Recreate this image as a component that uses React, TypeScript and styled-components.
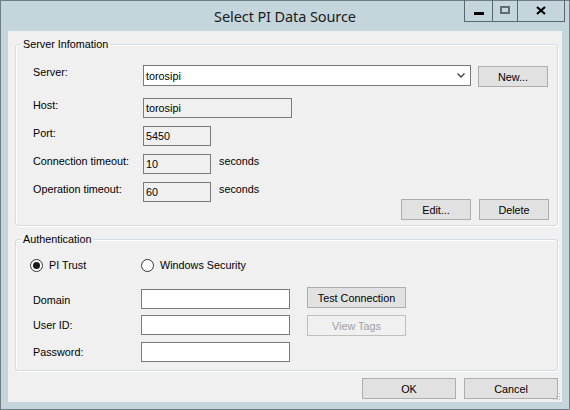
import React from "react";
import styled, { createGlobalStyle } from "styled-components";

const Global = createGlobalStyle`
  html, body { margin: 0; padding: 0; background: #ffffff; }
  body { font-family: "Liberation Sans", Arial, sans-serif; font-size: 10.8px; color: #000; }
  * { box-sizing: border-box; }
`;

const Window = styled.div`
  width: 570px;
  height: 410px;
  border: 1px solid #6f7e86;
  background: #c4d6dc;
  display: flex;
  flex-direction: column;
  position: relative;
`;

const TitleBar = styled.div`
  height: 30px;
  display: flex;
  align-items: center;
  justify-content: center;
  position: relative;
`;

const Title = styled.div`
  font-family: "Noto Sans", "Open Sans", sans-serif;
  font-size: 14.5px;
  color: #1b1b1b;
  margin-top: -1px;
  letter-spacing: -0.1px;
`;

const CaptionButtons = styled.div`
  position: absolute;
  top: -1px;
  right: 4px;
  height: 22px;
  display: flex;
  border: 1px solid #5b6770;
  border-top: none;
`;

const CaptionButton = styled.div<{ $w: number; $last?: boolean }>`
  width: ${(p) => p.$w}px;
  height: 21px;
  display: flex;
  align-items: center;
  justify-content: center;
  border-right: ${(p) => (p.$last ? "none" : "1px solid #5b6770")};
`;

const MinGlyph = styled.div`
  width: 10px;
  height: 3px;
  background: #000;
  margin-top: 6px;
`;

const MaxGlyph = styled.div`
  width: 10px;
  height: 8px;
  border: 2px solid #5f6a72;
  margin-top: -1px;
`;

const Client = styled.div`
  margin: 0 7px 7px 7px;
  height: 371px;
  background: #f0f0f0;
  padding: 0 4px 0 7px;
  display: flex;
  flex-direction: column;
  position: relative;
`;

const Group = styled.div<{ $top: number; $h: number }>`
  position: relative;
  margin-top: ${(p) => p.$top}px;
  height: ${(p) => p.$h}px;
  border: 1px solid #d5dbe0;
  border-radius: 3px;
  box-shadow: inset 1px 1px 0 #ffffff, 1px 1px 0 #ffffff;
  padding-left: 17px;
  display: flex;
  flex-direction: column;
`;

const Legend = styled.span`
  position: absolute;
  top: -8px;
  left: 5px;
  padding: 0 2px;
  background: #f0f0f0;
  line-height: 14px;
  color: #000;
`;

const Row = styled.div<{ $top: number; $align?: string }>`
  display: flex;
  align-items: ${(p) => p.$align || "flex-start"};
  margin-top: ${(p) => p.$top}px;
`;

const Label = styled.div<{ $w: number; $mt?: number }>`
  width: ${(p) => p.$w}px;
  margin-top: ${(p) => p.$mt || 0}px;
  line-height: 15px;
  flex-shrink: 0;
`;

const Box = styled.div<{ $w: number; $h?: number; $bg?: string; $mt?: number }>`
  width: ${(p) => p.$w}px;
  height: ${(p) => p.$h || 20}px;
  margin-top: ${(p) => p.$mt || 0}px;
  border: 1px solid #7a7a7a;
  background: ${(p) => p.$bg || "#ffffff"};
  display: flex;
  align-items: center;
  padding-left: 2px;
  flex-shrink: 0;
`;

const Combo = styled(Box)`
  justify-content: space-between;
  padding-right: 5px;
`;

const Unit = styled.div`
  margin-left: 8px;
  line-height: 15px;
`;

const Button = styled.div<{ $w: number; $disabled?: boolean; $ml?: number; $mt?: number }>`
  width: ${(p) => p.$w}px;
  height: 21px;
  margin-left: ${(p) => p.$ml || 0}px;
  margin-top: ${(p) => p.$mt || 0}px;
  border: 1px solid ${(p) => (p.$disabled ? "#bfbfbf" : "#adadad")};
  background: ${(p) => (p.$disabled ? "#f0f0f0" : "#e1e1e1")};
  color: ${(p) => (p.$disabled ? "#a0a0a0" : "#000")};
  display: flex;
  align-items: center;
  justify-content: center;
  flex-shrink: 0;
`;

const Spacer = styled.div<{ $w?: number }>`
  flex: ${(p) => (p.$w ? `0 0 ${p.$w}px` : "1")};
`;

const RadioItem = styled.div<{ $w: number; $ml?: number }>`
  display: flex;
  align-items: center;
  width: ${(p) => p.$w}px;
  margin-left: ${(p) => p.$ml || 0}px;
  line-height: 14px;
`;

const RadioCircle = styled.div<{ $checked?: boolean }>`
  width: 13px;
  height: 13px;
  border-radius: 50%;
  border: 1px solid #333333;
  background: #ffffff;
  margin-right: 6px;
  display: flex;
  align-items: center;
  justify-content: center;
  &::after {
    content: "";
    width: 7px;
    height: 7px;
    border-radius: 50%;
    background: ${(p) => (p.$checked ? "#1a1a1a" : "transparent")};
  }
`;

const Footer = styled.div`
  display: flex;
  justify-content: flex-end;
  gap: 8px;
  margin-top: 7px;
`;

const Grip = styled.svg`
  position: absolute;
  right: 1px;
  bottom: 1px;
`;

export default function App() {
  return (
    <>
      <Global />
      <Window>
        <TitleBar>
          <Title>Select PI Data Source</Title>
          <CaptionButtons>
            <CaptionButton $w={28}>
              <MinGlyph />
            </CaptionButton>
            <CaptionButton $w={25}>
              <MaxGlyph />
            </CaptionButton>
            <CaptionButton $w={46} $last>
              <svg width="10" height="9" viewBox="0 0 10 9">
                <path d="M1 1 L9 8 M9 1 L1 8" stroke="#000" strokeWidth="2.2" />
              </svg>
            </CaptionButton>
          </CaptionButtons>
        </TitleBar>
        <Client>
          <Group $top={13} $h={182}>
            <Legend>Server Infomation</Legend>
            <Row $top={20}>
              <Label $w={110}>Server:</Label>
              <Combo $w={328} $h={21}>
                <span>torosipi</span>
                <svg width="8" height="5" viewBox="0 0 8 5">
                  <path d="M0.5 0.5 L4 4 L7.5 0.5" stroke="#444" strokeWidth="1.4" fill="none" />
                </svg>
              </Combo>
              <Button $w={70} $ml={7} $mt={1}>New...</Button>
            </Row>
            <Row $top={11}>
              <Label $w={110}>Host:</Label>
              <Box $w={149} $bg="#f0f0f0">torosipi</Box>
            </Row>
            <Row $top={8}>
              <Label $w={110}>Port:</Label>
              <Box $w={68} $bg="#f0f0f0">5450</Box>
            </Row>
            <Row $top={8}>
              <Label $w={110}>Connection timeout:</Label>
              <Box $w={68} $bg="#f0f0f0">10</Box>
              <Unit>seconds</Unit>
            </Row>
            <Row $top={8}>
              <Label $w={110}>Operation timeout:</Label>
              <Box $w={68} $bg="#f0f0f0">60</Box>
              <Unit>seconds</Unit>
              <Spacer />
              <Button $w={70} $mt={17}>Edit...</Button>
              <Button $w={70} $ml={8} $mt={17}>Delete</Button>
              <Spacer $w={8} />
            </Row>
          </Group>
          <Group $top={13} $h={132}>
            <Legend>Authentication</Legend>
            <Row $top={18} $align="center">
              <RadioItem $w={111} $ml={-3}>
                <RadioCircle $checked />
                PI Trust
              </RadioItem>
              <RadioItem $w={150}>
                <RadioCircle />
                Windows Security
              </RadioItem>
            </Row>
            <Row $top={15}>
              <Label $w={108} $mt={6}>Domain</Label>
              <Box $w={149} $mt={2} />
              <Button $w={99} $ml={17}>Test Connection</Button>
            </Row>
            <Row $top={6}>
              <Label $w={108} $mt={3}>User ID:</Label>
              <Box $w={149} />
              <Button $w={99} $ml={17} $disabled>View Tags</Button>
            </Row>
            <Row $top={6}>
              <Label $w={108} $mt={3}>Password:</Label>
              <Box $w={149} />
            </Row>
          </Group>
          <Footer>
            <Button $w={94}>OK</Button>
            <Button $w={94}>Cancel</Button>
          </Footer>
          <Grip width="8" height="8" viewBox="0 0 8 8">
            <g fill="#b8b8b8">
              <rect x="6" y="0" width="1" height="1" />
              <rect x="6" y="3" width="1" height="1" />
              <rect x="3" y="3" width="1" height="1" />
              <rect x="6" y="6" width="1" height="1" />
              <rect x="3" y="6" width="1" height="1" />
              <rect x="0" y="6" width="1" height="1" />
            </g>
          </Grip>
        </Client>
      </Window>
    </>
  );
}
